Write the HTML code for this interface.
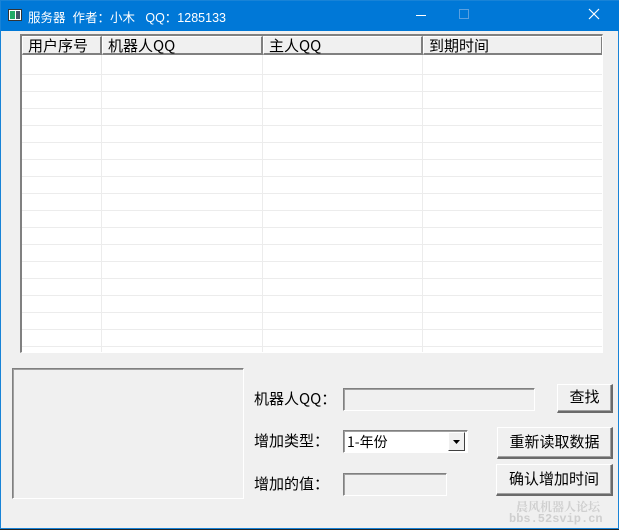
<!DOCTYPE html>
<html><head><meta charset="utf-8"><style>
*{margin:0;padding:0;box-sizing:border-box}
body{width:619px;height:530px;background:#222;position:relative;overflow:hidden;font-family:"Liberation Sans","Noto Sans CJK SC",sans-serif}
.win{position:absolute;left:0;top:0;width:619px;height:529px;background:#f0f0f0;border:1px solid #1883d7}
.tb{position:absolute;left:0;top:0;width:619px;height:30px;background:#0078d7;color:#fff;font-size:12px}
.a{position:absolute}
.tbl{position:absolute;left:19px;top:33px;width:583px;height:319px;background:#fff;border-top:2px solid #808080;border-left:2px solid #808080;border-right:1px solid #fff;border-bottom:1px solid #fff;overflow:hidden}
.hd{position:absolute;top:0;height:19px;background:#f0f0f0;border:1px solid #fff;border-right:2px solid #808080;border-bottom:2px solid #808080;font-size:15px;line-height:17px;padding-left:5px;color:#000;font-family:"WenQuanYi Zen Hei","Noto Sans CJK SC",sans-serif}
.cell{font-family:"WenQuanYi Zen Hei","Noto Sans CJK SC",sans-serif;font-size:15px;color:#000}
.inp{position:absolute;background:#f0f0f0;border-top:1px solid #808080;border-left:1px solid #808080;border-right:1px solid #fff;border-bottom:1px solid #fff;box-shadow:inset 1px 1px 0 #a0a0a0}
.btn{position:absolute;background:#f0f0f0;border:1px solid #fff;border-right:2px solid #6a6a6a;border-bottom:2px solid #6a6a6a;box-shadow:inset -1px -1px 0 #a0a0a0;text-align:center;font-size:15px;font-family:"WenQuanYi Zen Hei","Noto Sans CJK SC",sans-serif}
</style></head><body>
<div class="win">
<div class="tb">
 <div class="a" style="left:7px;top:8px;width:14px;height:12px;background:#fff;border:1px solid #333"><div class="a" style="left:1px;top:1px;width:5px;height:8px;background:#2a6"></div><div class="a" style="left:7px;top:1px;width:4px;height:8px;background:#456"></div></div>
 <div class="a" style="left:27px;top:6px;font-size:12.5px">服务器&nbsp; 作者：小木&nbsp;&nbsp; QQ：1285133</div>
 <div class="a" style="left:415px;top:14px;width:10px;height:1px;background:#fff"></div>
 <div class="a" style="left:458px;top:8px;width:10px;height:10px;border:1px solid #5aa0e0"></div>
 <svg class="a" style="left:587px;top:7px" width="12" height="12"><path d="M1 1L11 11M11 1L1 11" stroke="#fff" stroke-width="1.2"/></svg>
</div>
<div class="tbl">
 <svg class="a" style="left:0;top:0" width="581" height="317">
  <g stroke="#ececec">
  <path d="M79.5 19V317M240.5 19V317M400.5 19V317"/>
  <path d="M0 38.5H581M0 55.5H581M0 72.5H581M0 89.5H581M0 106.5H581M0 123.5H581M0 140.5H581M0 157.5H581M0 174.5H581M0 191.5H581M0 208.5H581M0 225.5H581M0 242.5H581M0 259.5H581M0 276.5H581M0 293.5H581M0 310.5H581"/>
  </g></svg>
 <div class="hd" style="left:0;width:80px">用户序号</div>
 <div class="hd" style="left:80px;width:161px">机器人QQ</div>
 <div class="hd" style="left:241px;width:160px">主人QQ</div>
 <div class="hd" style="left:401px;width:180px">到期时间</div>
</div>
<div class="a" style="left:11px;top:367px;width:232px;height:131px;border-top:1px solid #808080;border-left:1px solid #808080;border-right:1px solid #fff;border-bottom:1px solid #fff;box-shadow:inset 1px 1px 0 #a0a0a0"></div>
<div class="a cell" style="left:253px;top:387px">机器人QQ：</div>
<div class="a cell" style="left:253px;top:429px">增加类型：</div>
<div class="a cell" style="left:253px;top:472px">增加的值：</div>
<div class="inp" style="left:342px;top:387px;width:192px;height:23px"></div>
<div class="inp" style="left:342px;top:472px;width:104px;height:23px"></div>
<div class="inp" style="left:342px;top:429px;width:125px;height:23px;background:#fff">
 <div class="a cell" style="left:3px;top:1px;font-size:14px">1-年份</div>
 <div class="a" style="left:104px;top:1px;width:17px;height:19px;background:#f0f0f0;border:1px solid #fff;border-right:1px solid #404040;border-bottom:1px solid #404040"><svg class="a" style="left:4px;top:7px" width="8" height="5"><path d="M0 0H7L3.5 4Z" fill="#000"/></svg></div>
</div>
<div class="btn" style="left:556px;top:383px;width:56px;height:29px;line-height:24px">查找</div>
<div class="btn" style="left:496px;top:426px;width:116px;height:32px;line-height:27px">重新读取数据</div>
<div class="btn" style="left:495px;top:463px;width:117px;height:32px;line-height:27px">确认增加时间</div>
<div class="a" style="left:515px;top:497px;font-size:12px;font-weight:bold;color:#cfcfcf;font-family:'Noto Serif CJK SC',serif">晨风机器人论坛</div>
<div class="a" style="left:508px;top:511px;font-size:12px;font-weight:bold;color:#cfcfcf;font-family:'Liberation Mono',monospace">bbs.52svip.cn</div>
</div>
</body></html>
